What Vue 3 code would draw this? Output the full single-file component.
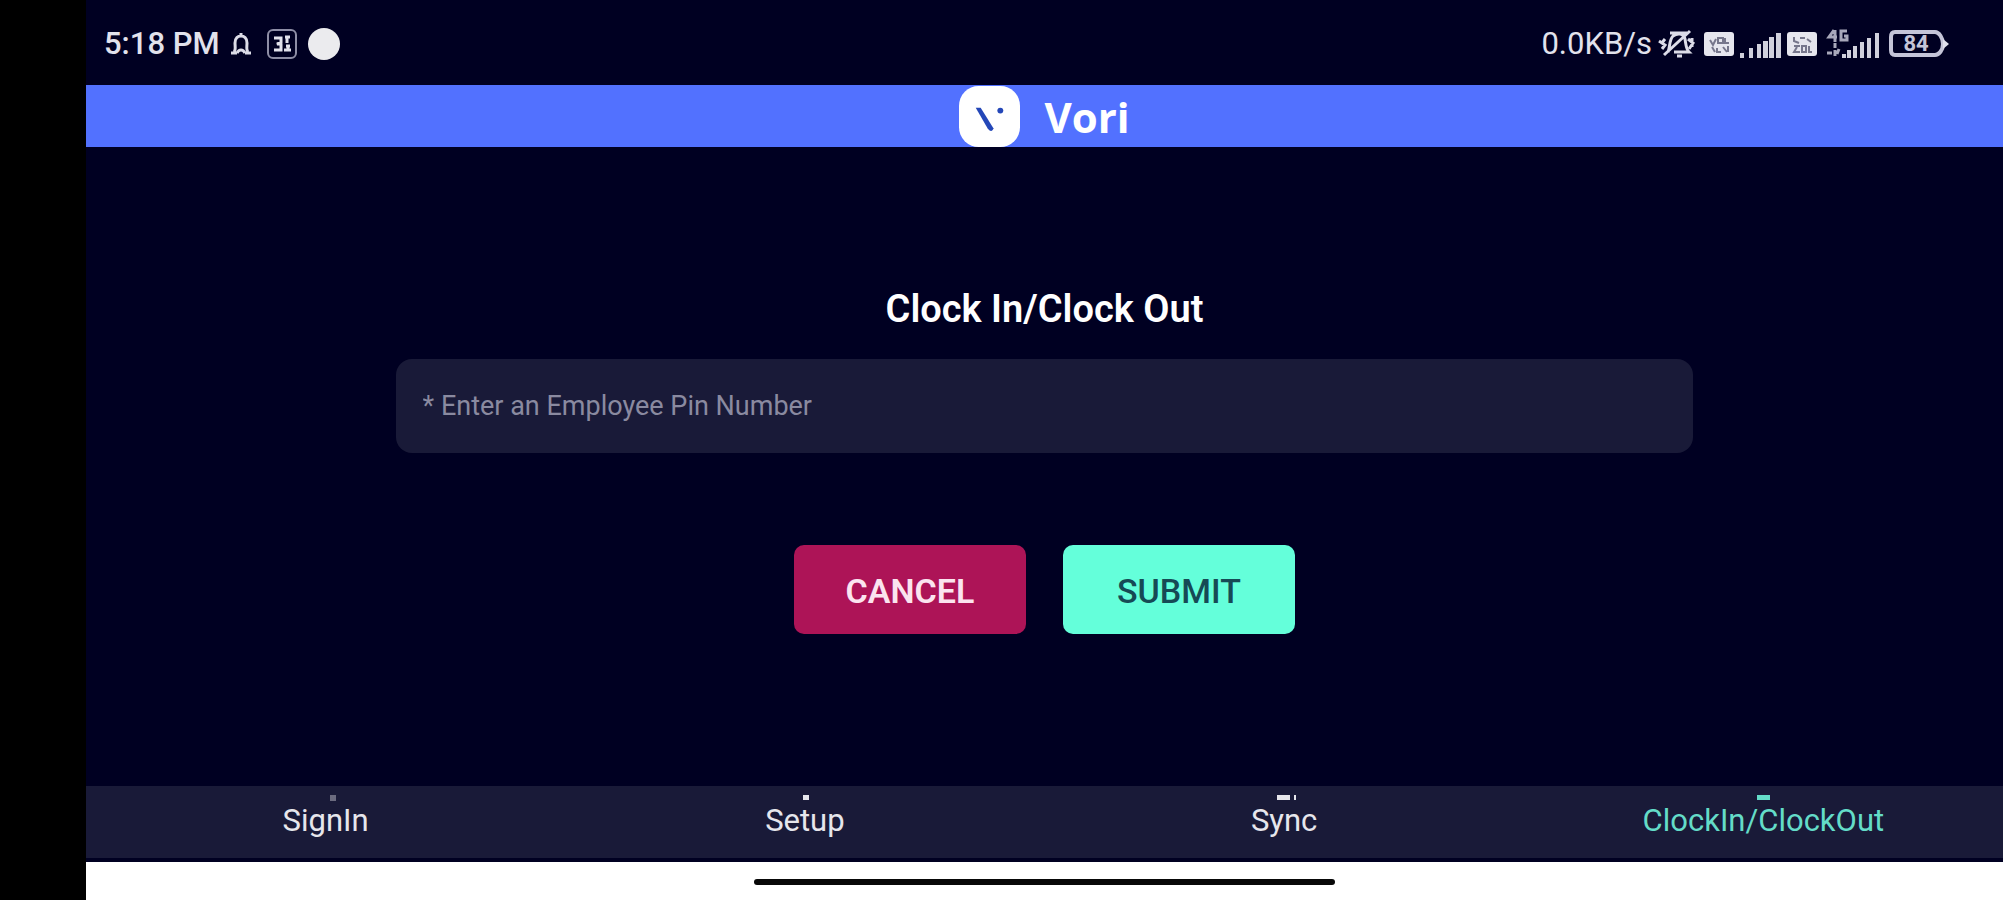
<script setup>
import { ref } from 'vue'

const pin = ref('')
const active = ref('clock')
const tabs = [
  { id: 'signin', label: 'SignIn' },
  { id: 'setup', label: 'Setup' },
  { id: 'sync', label: 'Sync' },
  { id: 'clock', label: 'ClockIn/ClockOut' },
]
</script>

<template>
  <div class="device">
    <div class="screen">
      <div class="status">
        <div class="status-left">
          <span class="time">5:18 PM</span>
          <svg class="bell" width="24" height="32" viewBox="0 0 24 32" aria-hidden="true">
            <path d="M2 25H8M16 25H22M5 24C7 22 6 18 6 15C6 10 9 8 12 8C15 8 18 10 18 15C18 18 17 22 19 24M12 5V8M8 25C10 21 14 21 16 25" />
          </svg>
          <svg class="app-box" width="32" height="32" viewBox="0 0 32 32" aria-hidden="true">
            <rect x="2" y="2" width="28" height="28" rx="5" />
            <path class="heavy" d="M8 10H15V14L11 16H15V22H8M19 9H24M21 9V15M20 18H24M22 18V22M18 22H25" />
          </svg>
          <span class="dot"></span>
        </div>
        <div class="status-right">
          <span class="speed">0.0KB/s</span>
          <svg class="muted" width="40" height="32" viewBox="0 0 40 32" aria-hidden="true">
            <path d="M3 13L9 17L6 21M9 11L5 16M32 11L37 15L33 21M36 10V19" />
            <path d="M12 24C14 20 13 12 17 8C21 5 28 5 29 11C30 17 30 21 33 24H18M21 28H26M34 3L8 27M14 5H31" />
          </svg>
          <svg class="sim" width="32" height="32" viewBox="0 0 32 32" aria-hidden="true">
            <rect x="1" y="4" width="30" height="24" rx="3" />
            <path d="M7 12L10 17L13 11M15 10H20V15H15ZM22 10V15H26M9 19L12 24M14 20V24H18M20 19L24 24M25 18V24" />
          </svg>
          <svg class="bars" width="43" height="32" viewBox="0 0 43 32" aria-hidden="true">
            <path d="M1 25h4v5h-4zM10 20h4v10h-4zM18 16h4v14h-4zM24 13h5v17h-5zM30 9h5v21h-5zM37 5h5v25h-5z" />
          </svg>
          <svg class="sim" width="32" height="32" viewBox="0 0 32 32" aria-hidden="true">
            <rect x="1" y="4" width="30" height="24" rx="3" />
            <path d="M8 9V13L13 15M14 10H19M21 11L25 14M8 18H14M11 19L8 24H14M16 18V24H20V18ZM23 18V24H26" />
          </svg>
          <svg class="bars data" width="54" height="32" viewBox="0 0 54 32" aria-hidden="true">
            <path class="line" d="M8 2L3 9H11M9 2V14M21 3H15V12H21V8H18M9 15V20M1 25H6M9 22V28M13 21L11 26" />
            <path d="M16 26h4v4h-4zM21 22h4v8h-4zM27 18h4v12h-4zM34 14h4v16h-4zM41 10h4v20h-4zM49 5h4v25h-4z" />
          </svg>
          <svg class="battery" width="60" height="32" viewBox="0 0 60 32" aria-hidden="true">
            <path class="shell" d="M6 4H46C50 4 54 10 54 16C54 22 50 27 46 27H6C3 27 2 25 2 22V9C2 6 3 4 6 4Z" />
            <path class="tip" d="M54 11L60 16L54 21Z" />
            <text x="27" y="23" text-anchor="middle">84</text>
          </svg>
        </div>
      </div>

      <header class="brand">
        <svg class="logo" width="61" height="61" viewBox="0 0 62 62" aria-hidden="true">
          <rect width="62" height="62" rx="20" />
          <path d="M17 22H22L35 43C34 47 31 46 29 43Z" />
          <circle cx="42" cy="25" r="3" />
        </svg>
        <span class="brand-name">Vori</span>
      </header>

      <main class="content">
        <form class="clock-form" @submit.prevent>
          <h1><label for="pin">Clock In/Clock Out</label></h1>
          <input id="pin" v-model="pin" type="text" inputmode="numeric" placeholder="* Enter an Employee Pin Number" />
          <div class="actions">
            <button type="button" class="cancel" @click="pin = ''">CANCEL</button>
            <button type="submit" class="submit">SUBMIT</button>
          </div>
        </form>
      </main>

      <nav class="tabs">
        <a v-for="tab in tabs" :key="tab.id" href="#" :class="{ active: active === tab.id }" @click.prevent="active = tab.id">
          <svg width="40" height="8" viewBox="0 0 40 8" aria-hidden="true">
            <rect v-if="tab.id === 'signin'" class="dim" x="24" y="1" width="6" height="6" />
            <rect v-if="tab.id === 'setup'" x="18" y="1" width="6" height="5" />
            <path v-if="tab.id === 'sync'" d="M13 1h13v5h-13zM30 1h2v5h-2z" />
            <rect v-if="tab.id === 'clock'" x="14" y="1" width="13" height="5" />
          </svg>
          <span>{{ tab.label }}</span>
        </a>
      </nav>
      <div class="home"><span></span></div>
    </div>
  </div>
</template>

<style>
body {
  margin: 0;
  background: #000;
}
</style>

<style scoped>
.device {
  min-height: 100vh;
  box-sizing: border-box;
  display: flex;
  padding-left: 86px;
  background: #000;
  color: #fff;
  font-family: Roboto, "Liberation Sans", sans-serif;
}
.screen {
  flex: 1;
  min-width: 0;
  display: flex;
  flex-direction: column;
  background: #000022;
}
.status {
  height: 85px;
  display: flex;
  justify-content: space-between;
  align-items: center;
  padding: 0 54px 0 18px;
  box-sizing: border-box;
  color: #e2e2ec;
  font-size: 31px;
  line-height: 36px;
}
.status-left,
.status-right {
  display: flex;
  align-items: center;
  padding-top: 3px;
}
.time {
  font-weight: 500;
}
svg {
  display: block;
  flex: none;
}
.bell,
.app-box,
.muted {
  fill: none;
  stroke: #dcdce8;
  stroke-width: 3;
}
.bell {
  margin: 0 13px 0 9px;
}
.app-box {
  stroke: #8e8ea6;
  stroke-width: 2;
}
.app-box .heavy {
  stroke: #e2e2ec;
  stroke-width: 3;
}
.dot {
  width: 32px;
  height: 32px;
  margin-left: 10px;
  border-radius: 50%;
  background: #ebebee;
}
.muted {
  margin: 0 7px 0 4px;
}
.sim rect {
  fill: #e6e6ee;
}
.sim path {
  fill: none;
  stroke: #77778c;
  stroke-width: 2;
}
.bars {
  margin: 0 4px;
  fill: #d0d0dc;
}
.bars.data {
  margin: 0 9px 0 8px;
}
.bars .line {
  fill: none;
  stroke: #a8a8ba;
  stroke-width: 3;
}
.battery .shell {
  fill: none;
  stroke: #c4c4d8;
  stroke-width: 4;
}
.battery .tip {
  fill: #e0e0ec;
}
.battery text {
  fill: #c4c4d8;
  font-size: 22px;
  font-weight: 700;
}
.brand {
  height: 62px;
  display: flex;
  align-items: center;
  justify-content: center;
  gap: 24px;
  background: #5271ff;
}
.logo rect {
  fill: #fff;
}
.logo path,
.logo circle {
  fill: #2447b8;
}
.brand-name {
  padding-top: 2px;
  font-family: "Open Sans", "Noto Sans", sans-serif;
  font-size: 42px;
  line-height: 56px;
  font-weight: 700;
}
.content {
  flex: 1;
  display: flex;
  justify-content: center;
  padding-top: 138px;
}
.clock-form {
  width: 67.7%;
  display: flex;
  flex-direction: column;
  align-items: center;
}
h1 {
  margin: 0 0 26px;
  font-size: 38px;
  line-height: 48px;
  font-weight: 600;
}
input {
  width: 100%;
  height: 94px;
  box-sizing: border-box;
  padding: 0 27px;
  border: 0;
  border-radius: 16px;
  background: #191a38;
  color: #fff;
  font: 400 27px/36px Roboto, "Liberation Sans", sans-serif;
}
input::placeholder {
  color: #8a8aa0;
  opacity: 1;
}
.actions {
  display: flex;
  gap: 37px;
  margin-top: 92px;
}
button {
  width: 232px;
  height: 89px;
  padding: 2px 0 0;
  border: 0;
  border-radius: 10px;
  font: 500 34px/44px Roboto, "Liberation Sans", sans-serif;
}
.cancel {
  background: #ad1457;
  color: #fbe4ef;
  font-weight: 600;
}
.submit {
  background: #64ffda;
  color: #164a55;
}
.tabs {
  height: 76px;
  box-sizing: border-box;
  display: grid;
  grid-template-columns: repeat(4, 1fr);
  background: #191a38;
  border-bottom: 4px solid #000022;
}
.tabs a {
  display: flex;
  flex-direction: column;
  align-items: center;
  padding-top: 8px;
  color: #e6e6ec;
  font-size: 31px;
  line-height: 38px;
  text-decoration: none;
}
.tabs a.active {
  color: #64dcc8;
}
.tabs svg {
  fill: currentColor;
}
.tabs .dim {
  opacity: 0.4;
}
.home {
  height: 38px;
  display: flex;
  align-items: center;
  justify-content: center;
  padding-top: 2px;
  box-sizing: border-box;
  background: #fff;
}
.home span {
  width: 30.3%;
  height: 6px;
  border-radius: 3px;
  background: #080808;
}
</style>
